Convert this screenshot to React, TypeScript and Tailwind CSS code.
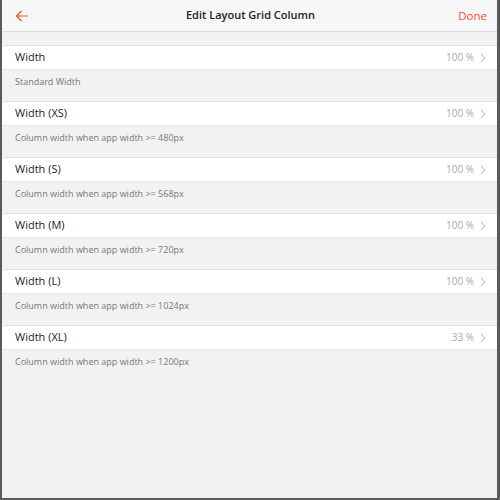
const rows = [
  { label: 'Width', value: '100 %', desc: 'Standard Width' },
  { label: 'Width (XS)', value: '100 %', desc: 'Column width when app width >= 480px' },
  { label: 'Width (S)', value: '100 %', desc: 'Column width when app width >= 568px' },
  { label: 'Width (M)', value: '100 %', desc: 'Column width when app width >= 720px' },
  { label: 'Width (L)', value: '100 %', desc: 'Column width when app width >= 1024px' },
  { label: 'Width (XL)', value: '33 %', desc: 'Column width when app width >= 1200px' },
];

function Chevron() {
  return (
    <svg width="6" height="10" viewBox="0 0 6 10" fill="none" className="ml-[6px]">
      <path d="M1 1l4 4-4 4" stroke="#b5b5b5" strokeWidth="1" />
    </svg>
  );
}

export default function App() {
  return (
    <div
      className="relative w-[500px] h-[500px] overflow-hidden bg-[#5a5a5a]"
      style={{ fontFamily: '"Open Sans", "Noto Sans", sans-serif' }}
    >
      {/* page behind the panel */}
      <div className="absolute top-[-9px] left-[78px] text-[11px] text-[#333]">Label</div>
      <div className="absolute top-[-9px] left-[278px] text-[11px] text-[#333]">Common Controls</div>

      <div className="absolute left-[2px] right-[3px] top-0 bottom-[2px] bg-[#f2f2f2] flex flex-col">
        {/* Header */}
        <div className="h-[32px] grid grid-cols-[1fr_auto_1fr] items-center px-[13px] bg-[#f7f7f7] border-b border-[#dcdcdc] shrink-0">
          <svg width="14" height="12" viewBox="0 0 14 12" fill="none">
            <path d="M13 6H1.5M6.5 1L1.5 6l5 5" stroke="#f0512b" strokeWidth="1.2" />
          </svg>
          <div className="text-[11px] font-semibold text-[#222] pl-[2px]">Edit Layout Grid Column</div>
          <div className="justify-self-end text-[11.5px] text-[#f0512b] pr-[-3px] mr-[-3px]">Done</div>
        </div>

        <div className="h-[13px] shrink-0" />

        {rows.map((r) => (
          <div key={r.label} className="flex flex-col">
            <div className="h-[25px] bg-white border-y border-[#e3e3e3] flex items-center justify-between pl-[13px] pr-[11px]">
              <span className="text-[11px] text-[#222]">{r.label}</span>
              <span className="flex items-center text-[10px] text-[#a9a9a9]">
                {r.value}
                <Chevron />
              </span>
            </div>
            <div className="h-[31px] pl-[13px] pt-[5px] text-[9px] text-[#777]">{r.desc}</div>
          </div>
        ))}
      </div>
    </div>
  );
}
